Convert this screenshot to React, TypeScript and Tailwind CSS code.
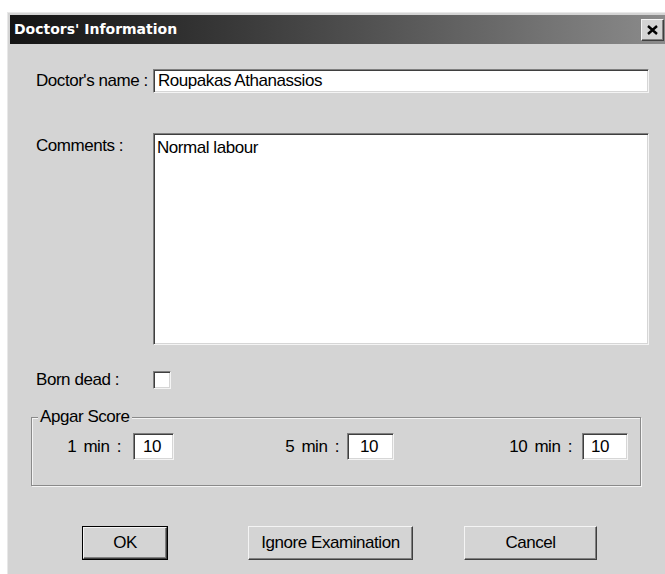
import React from 'react';

// Classic Win32 3D edges
const sunken =
  'border border-t-[#7f7f7f] border-l-[#7f7f7f] border-b-[#f4f4f4] border-r-[#f4f4f4] shadow-[inset_1px_1px_0_#3f3f3f,inset_-1px_-1px_0_#d6d6d6] bg-white';
const raised =
  'border border-t-[#f4f4f4] border-l-[#f4f4f4] border-b-[#3f3f3f] border-r-[#3f3f3f] shadow-[inset_-1px_-1px_0_#808080] bg-[#d4d4d4]';

const font = { fontFamily: '"Liberation Sans", Arial, sans-serif' };
const text = 'text-[17px] tracking-[-0.45px]';

const Field: React.FC<{ value: string; className?: string }> = ({ value, className }) => (
  <div className={`${sunken} ${className ?? ''} ${text} flex items-center text-black`}>
    {value}
  </div>
);

const Button: React.FC<{ label: string; isDefault?: boolean; className?: string }> = ({
  label,
  isDefault,
  className,
}) => (
  <div className={`${isDefault ? 'border border-black' : ''} ${className ?? ''} h-[34px]`}>
    <div className={`${raised} ${text} h-full flex items-center justify-center text-black`}>{label}</div>
  </div>
);

export default function App() {
  return (
    <div className="w-[665px] h-[574px] bg-white overflow-hidden pt-[12px] pl-[7px]" style={font}>
      <div className="w-[662px] h-[600px] bg-[#d4d4d4] border-t border-l border-[#e8e8e8] pt-[2px] pl-[2px]">
        {/* title bar */}
        <div className="h-[29px] bg-gradient-to-r from-[#141414] via-[#4c4c4c] to-[#8c8c8c] flex items-center pl-[4px] pr-[4px]">
          <span
            className="text-white font-bold text-[14px]"
            style={{ fontFamily: '"DejaVu Sans", Verdana, sans-serif' }}
          >
            Doctors' Information
          </span>
          <div className={`${raised} ml-auto mr-[1px] w-[23px] h-[22px] flex items-center justify-center`}>
            <svg width="11" height="10" viewBox="0 0 11 10">
              <path d="M1 1 L10 9 M10 1 L1 9" stroke="black" strokeWidth="2.4" />
            </svg>
          </div>
        </div>

        {/* body */}
        <div className="pl-[26px] pr-[16px] pt-[25px] text-black">
          <div className="flex items-center h-[24px]">
            <span className={`w-[117px] ${text}`}>Doctor's name :</span>
            <Field value="Roupakas Athanassios" className="w-[496px] h-[24px] px-[4px]" />
          </div>

          <div className="flex mt-[40px]">
            <span className={`w-[117px] ${text}`}>Comments :</span>
            <div className={`${sunken} ${text} w-[496px] h-[212px] px-[3px] py-[1px]`}>Normal labour</div>
          </div>

          <div className="flex items-center mt-[26px] h-[18px]">
            <span className={`w-[117px] ${text}`}>Born dead :</span>
            <div className={`${sunken} w-[18px] h-[18px]`} />
          </div>

          {/* Apgar group */}
          <div className="relative mt-[28px] ml-[-5px] w-[610px] h-[69px] border border-[#8a8a8a] shadow-[1px_1px_0_#f4f4f4,inset_1px_1px_0_#f4f4f4]">
            <span className={`absolute left-[6px] top-[-11px] bg-[#d4d4d4] px-[2px] leading-[20px] ${text}`}>
              Apgar Score
            </span>
            <div className="flex items-center pt-[15px] pl-[13px] [word-spacing:3px]">
              <span className={`w-[88px] text-right pr-[12px] ${text}`}>1 min :</span>
              <Field value="10" className="w-[41px] h-[27px] pl-[9px]" />
              <span className={`w-[173px] text-right pr-[8px] ${text}`}>5 min :</span>
              <Field value="10" className="w-[47px] h-[27px] pl-[12px]" />
              <span className={`w-[188px] text-right pr-[10px] ${text}`}>10 min :</span>
              <Field value="10" className="w-[46px] h-[27px] pl-[8px]" />
            </div>
          </div>

          <div className="flex mt-[40px] ml-[46px]">
            <Button label="OK" isDefault className="w-[86px]" />
            <Button label="Ignore Examination" className="w-[165px] ml-[80px]" />
            <Button label="Cancel" className="w-[133px] ml-[51px]" />
          </div>
        </div>
      </div>
    </div>
  );
}
